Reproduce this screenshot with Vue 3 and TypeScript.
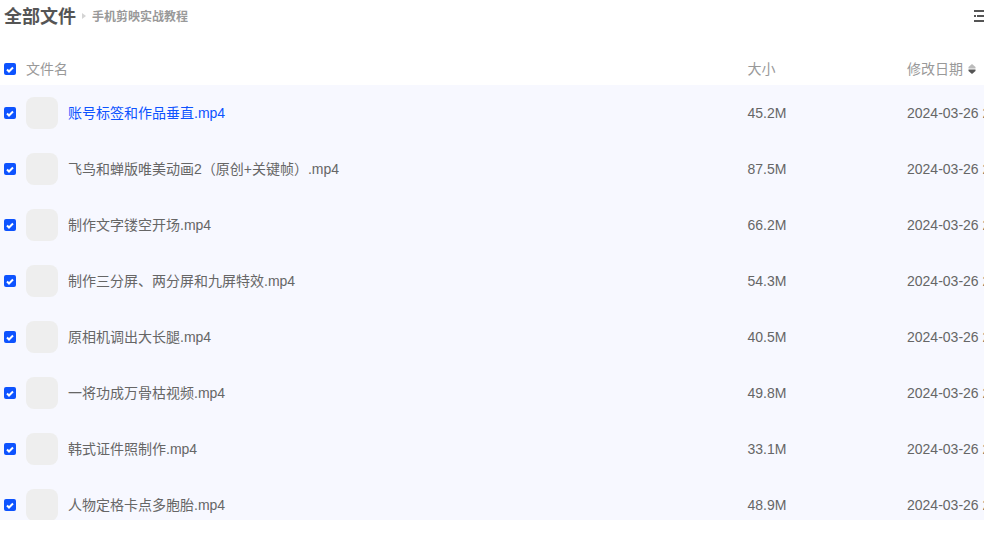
<script setup lang="ts">
interface FileRow { name: string; size: string; date: string }
const files: FileRow[] = [
  { name: '账号标签和作品垂直.mp4', size: '45.2M', date: '2024-03-26 20:18' },
  { name: '飞鸟和蝉版唯美动画2（原创+关键帧）.mp4', size: '87.5M', date: '2024-03-26 20:18' },
  { name: '制作文字镂空开场.mp4', size: '66.2M', date: '2024-03-26 20:18' },
  { name: '制作三分屏、两分屏和九屏特效.mp4', size: '54.3M', date: '2024-03-26 20:18' },
  { name: '原相机调出大长腿.mp4', size: '40.5M', date: '2024-03-26 20:18' },
  { name: '一将功成万骨枯视频.mp4', size: '49.8M', date: '2024-03-26 20:18' },
  { name: '韩式证件照制作.mp4', size: '33.1M', date: '2024-03-26 20:18' },
  { name: '人物定格卡点多胞胎.mp4', size: '48.9M', date: '2024-03-26 20:18' },
]
</script>

<template>
  <div class="page">
    <header class="crumbs">
      <span class="root">全部文件</span>
      <svg class="sep" width="4" height="6" viewBox="0 0 4 6"><path d="M0 0l4 3-4 3z" fill="#d4d4d4" /></svg>
      <span class="folder">手机剪映实战教程</span>
      <svg class="view" width="10" height="12" viewBox="0 0 10 12">
        <path d="M0 1h10M3 6h7M0 11h10M0 6h2" stroke="#555" stroke-width="2" fill="none" />
      </svg>
    </header>
    <div class="head row-grid">
      <span class="check"><svg width="8" height="7" viewBox="0 0 8 7"><path d="M1 3.500l2 2 4-4" stroke="#fff" stroke-width="2" fill="none" /></svg></span>
      <span class="name">文件名</span>
      <span class="size">大小</span>
      <span class="date head-date"><span class="label">修改日期</span><svg class="sort" width="8" height="10" viewBox="0 0 8 10">
          <path d="M4 0L7.500 3v1.500H0.500V3z" fill="#bbb" />
          <path d="M4 10L7.500 7V5.500H0.500V7z" fill="#555" />
        </svg>
      </span>
    </div>
    <div class="list">
      <div v-for="(f, i) in files" :key="f.name" class="row row-grid">
        <span class="check"><svg width="8" height="7" viewBox="0 0 8 7"><path d="M1 3.500l2 2 4-4" stroke="#fff" stroke-width="2" fill="none" /></svg></span>
        <span class="thumb"></span>
        <span class="fname" :class="{ active: i === 0 }">{{ f.name }}</span>
        <span class="size">{{ f.size }}</span>
        <span class="date">{{ f.date }}</span>
      </div>
    </div>
  </div>
</template>

<style>
html, body { margin: 0; background: #fff; overflow: hidden; }
</style>

<style scoped>
.page {
  width: 984px;
  height: 534px;
  overflow: hidden;
  font-family: "Liberation Sans", "Noto Sans CJK SC", sans-serif;
  font-size: 14px;
  color: #666;
}
.crumbs {
  height: 31px;
  display: flex;
  align-items: center;
  padding-left: 4px;
}
.root { font-size: 18px; font-weight: 700; color: #555; padding-bottom: 1px; }
.sep { margin: 0 6px 0 6px; }
.folder { font-size: 12px; font-weight: 700; color: #999; padding-bottom: 1px; }
.view { margin-left: auto; flex: none; }
.row-grid {
  display: flex;
  align-items: center;
  width: 1100px;
  padding-left: 4px;
}
.head { height: 32px; margin-top: 22px; color: #999; }
.head .name, .head .size, .head .label { padding-bottom: 2px; }
.check {
  width: 12px;
  height: 12px;
  border-radius: 2px;
  background: #0d53ff;
  display: flex;
  align-items: center;
  justify-content: center;
  flex: none;
  margin-right: 10px;
}
.head .name { width: 721px; flex: none; }
.size { width: 160px; flex: none; padding-left: 0.5px; box-sizing: border-box; }
.date { flex: none; white-space: nowrap; }
.head-date { display: flex; align-items: center; }
.sort { margin-left: 5px; }
.list { height: 435px; overflow: hidden; background: #f7f8ff; }
.row { height: 56px; }
.thumb {
  width: 32px;
  height: 32px;
  border-radius: 8px;
  background: #eee;
  flex: none;
  margin-right: 10px;
}
.fname { width: 679px; flex: none; white-space: nowrap; color: #666; padding-bottom: 2px; }
.fname.active { color: #0d53ff; }
</style>
